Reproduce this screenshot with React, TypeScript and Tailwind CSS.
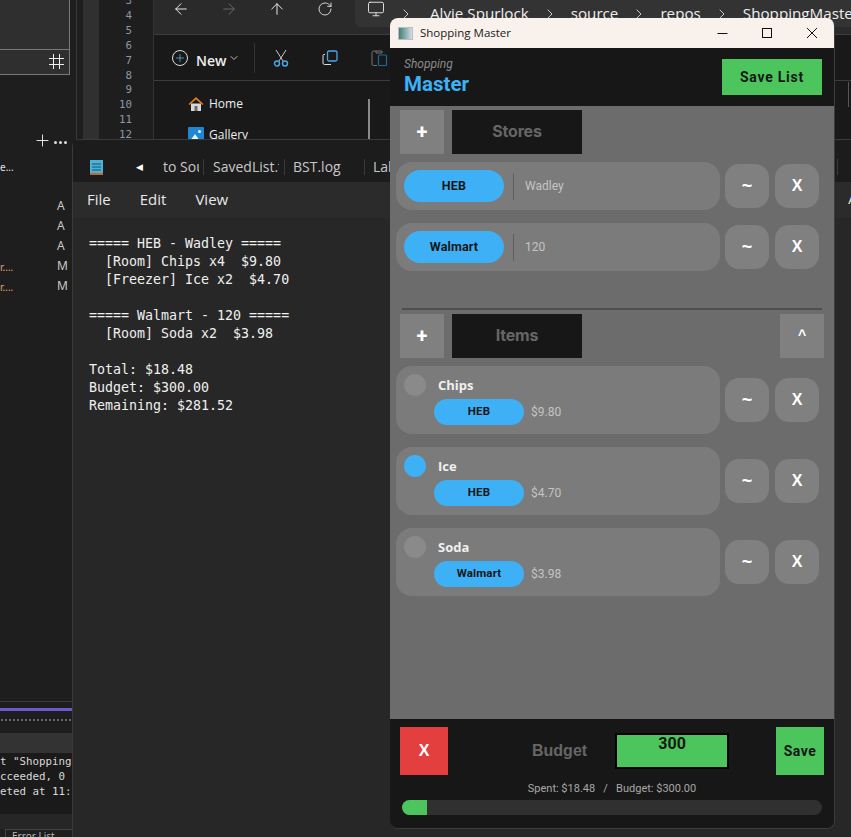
import { ArrowLeft, ArrowRight, ArrowUp, ChevronDown, ChevronRight, Monitor, Plus, RotateCw } from "lucide-react";

const stores = [
	{ name: "HEB", location: "Wadley" },
	{ name: "Walmart", location: "120" },
];

const items = [
	{ name: "Chips", store: "HEB", price: "$9.80", checked: false },
	{ name: "Ice", store: "HEB", price: "$4.70", checked: true },
	{ name: "Soda", store: "Walmart", price: "$3.98", checked: false },
];

const note = `===== HEB - Wadley =====
  [Room] Chips x4  $9.80
  [Freezer] Ice x2  $4.70

===== Walmart - 120 =====
  [Room] Soda x2  $3.98

Total: $18.48
Budget: $300.00
Remaining: $281.52`;

const CardButtons = () => (
	<div className="flex gap-[6px] font-['Liberation_Sans',sans-serif] font-bold text-white">
		<button className="w-11 h-11 rounded-[14px] bg-[#808080] text-lg leading-none">~</button>
		<button className="w-11 h-11 rounded-[14px] bg-[#808080] text-base leading-none">X</button>
	</div>
);

const SectionHead = ({ title, collapse }: { title: string; collapse?: boolean }) => (
	<div className="flex items-center h-11 pl-[10px] pr-[10px]">
		<button className="w-11 h-11 bg-[#808080] text-white text-xl font-bold leading-none">+</button>
		<div className="ml-2 w-[130px] h-11 pb-[2px] flex items-center justify-center bg-[#171717] text-[#666666] text-base font-bold font-['Inter',sans-serif] tracking-[-0.2px]">
			{title}
		</div>
		{collapse && (
			<button className="ml-auto w-11 h-11 pb-[3px] bg-[#808080] text-white text-sm font-bold leading-none font-['Liberation_Sans',sans-serif]">^</button>
		)}
	</div>
);

const ShoppingWindow = () => (
	<div className="absolute left-[390px] top-[18px] w-[445px] h-[811px] flex flex-col rounded-lg overflow-hidden border-b border-r border-[#3c3c3c] font-['Roboto',sans-serif]">
		<div className="flex items-center h-[30px] shrink-0 bg-[#f9f1ec] text-[#1a1a1a]">
			<div className="ml-[8px] w-[15px] h-[13px] border border-[#b9bdc4] bg-gradient-to-r from-[#3f7f78] to-[#d5dde3]" />
			<span className="ml-[7px] text-[11.5px] font-['Open_Sans',sans-serif]">Shopping Master</span>
			<svg className="ml-auto" width="12" height="12" viewBox="0 0 12 12" stroke="#111111" fill="none">
				<path d="M1.5 6.5h10" />
			</svg>
			<svg className="ml-[33px]" width="12" height="12" viewBox="0 0 12 12" stroke="#111111" fill="none">
				<rect x="1.5" y="1.5" width="9" height="9" />
			</svg>
			<svg className="ml-[33px] mr-[16px]" width="12" height="12" viewBox="0 0 12 12" stroke="#111111" fill="none">
				<path d="M1 1l10 10M11 1L1 11" />
			</svg>
		</div>

		<div className="flex items-center justify-between h-[58px] shrink-0 bg-[#171717] pl-[14px] pr-[12px]">
			<div className="flex flex-col">
				<span className="text-xs italic text-[#8a8a8a] leading-[14px]">Shopping</span>
				<span className="text-[20.5px] font-bold text-[#3eb0f5] leading-[26px]">Master</span>
			</div>
			<button className="w-[100px] h-9 bg-[#4bc55c] text-[#171717] text-sm font-bold tracking-[0.75px]">Save List</button>
		</div>

		<div className="flex-1 flex flex-col bg-[#6c6c6c] pt-1">
			<SectionHead title="Stores" />
			<div className="flex flex-col gap-[13px] mt-2 pl-[6px]">
				{stores.map((s) => (
					<div key={s.name} className="flex items-center gap-[5px]">
						<div className="w-[324px] h-12 flex items-center rounded-2xl bg-[#7b7b7b] pl-2">
							<div className="w-[100px] h-8 flex items-center justify-center rounded-full bg-[#3eb0f5] text-[#171717] text-[12.5px] tracking-[0.15px] font-bold">
								{s.name}
							</div>
							<div className="ml-[9px] w-px h-[27px] bg-[#5f5f5f]" />
							<span className="ml-[11px] text-xs text-[#c4c4c4]">{s.location}</span>
						</div>
						<CardButtons />
					</div>
				))}
			</div>

			<div className="h-[2px] mx-3 mt-[37px] mb-1 bg-[#4f4f4f]" />
			<SectionHead title="Items" collapse />

			<div className="flex flex-col gap-[13px] mt-2 pl-[6px]">
				{items.map((it) => (
					<div key={it.name} className="flex items-center gap-[5px]">
						<div className="w-[324px] h-[68px] flex flex-col rounded-2xl bg-[#7b7b7b] pl-[38px] relative">
							<span className={`absolute left-2 top-2 w-[22px] h-[22px] rounded-full ${it.checked ? "bg-[#3eb0f5]" : "bg-[#8a8a8a]"}`} />
							<span className="mt-[10px] ml-[4px] h-5 text-[13px] font-bold text-[#f0f0f0] font-['Open_Sans',sans-serif]">{it.name}</span>
							<div className="flex items-center mt-[3px]">
								<div className="w-[90px] h-[26px] flex items-center justify-center rounded-full bg-[#3eb0f5] text-[#171717] text-[11.5px] tracking-[0.15px] font-bold">
									{it.store}
								</div>
								<span className="ml-[7px] text-xs text-[#c4c4c4]">{it.price}</span>
							</div>
						</div>
						<CardButtons />
					</div>
				))}
			</div>
		</div>

		<div className="h-[109px] shrink-0 bg-[#171717] flex flex-col px-[10px] pt-2">
			<div className="flex items-center h-12">
				<button className="w-12 h-12 bg-[#e33f3f] text-white text-base font-bold font-['Liberation_Sans',sans-serif]">X</button>
				<span className="ml-[84px] text-base font-bold text-[#666666] font-['Liberation_Sans',sans-serif]">Budget</span>
				<div className="ml-[28px] w-[114px] h-9 border-2 border-black bg-[#4bc55c] text-center text-base font-bold text-[#171717] leading-[18px]">300</div>
				<button className="ml-auto w-12 h-12 bg-[#4bc55c] text-[#171717] text-sm font-bold tracking-[0.5px]">Save</button>
			</div>
			<div className="mt-[7px] h-[14px] flex justify-center text-[11px] leading-[14px] text-[#a8a8a8] whitespace-pre">
				<span>Spent: $18.48   /   Budget: $300.00</span>
			</div>
			<div className="mt-[4px] mx-[2px] h-[15px] rounded-full bg-[#303030] overflow-hidden">
				<div className="w-[25px] h-full bg-[#4bc55c]" />
			</div>
		</div>
	</div>
);

const NotepadWindow = () => (
	<div className="absolute left-[72px] top-[139px] w-[779px] h-[698px] flex flex-col rounded-tl-lg border-l border-t border-[#3a3a3a] bg-[#272727] text-[#e8e8e8]">
		<div className="flex items-center h-[42px] shrink-0 pt-[12px] bg-[#1c1c1c] text-sm text-[#c8c8c8] font-['Open_Sans',sans-serif] whitespace-nowrap">
			<svg className="ml-[17px]" width="13" height="16" viewBox="0 0 13 16">
				<rect y="1" width="13" height="13" fill="#4bb3d9" />
				<rect y="14" width="13" height="2" fill="#c8662a" />
				<path d="M2 5h9M2 8h9M2 11h9" stroke="#15506b" />
			</svg>
			<span className="ml-[33px] text-[9px] text-white">◀</span>
			<span className="ml-[20px] w-[36px] overflow-hidden">to Source</span>
			<span className="ml-[4px] h-[16px] w-px bg-[#3a3a3a]" />
			<span className="ml-[9px] w-[66px] overflow-hidden">SavedList.txt</span>
			<span className="ml-[5px] h-[16px] w-px bg-[#3a3a3a]" />
			<span className="ml-[8px] w-[46px]">BST.log</span>
			<span className="ml-[25px] h-[16px] w-px bg-[#3a3a3a]" />
			<span className="ml-[8px]">Lab</span>
			<span className="ml-[440px] h-[16px] w-px bg-[#3a3a3a]" />
		</div>
		<div className="flex items-center gap-[29px] h-[36px] pb-[2px] shrink-0 bg-[#2b2b2b] pl-[14px] text-[15px] font-['Open_Sans',sans-serif]">
			<span>File</span>
			<span>Edit</span>
			<span>View</span>
			<span className="ml-auto -mr-[6px] text-sm">A</span>
		</div>
		<pre className="pl-[16px] pt-[17px] font-['DejaVu_Sans_Mono',monospace] text-[13.3px] leading-[18px] text-[#f0f0f0]">{note}</pre>
	</div>
);

const ExplorerWindow = () => (
	<div className="absolute left-[153px] top-0 w-[698px] h-[140px] bg-[#191919] border-l border-[#333333] font-['Open_Sans',sans-serif] text-[#eeeeee]">
		<div className="flex items-start h-[35px] bg-[#2a2a2a] border-b border-[#3c3c3c] pl-[3px] whitespace-nowrap">
			<span className="w-12 h-[18px] shrink-0 flex items-center justify-center">
				<ArrowLeft className="w-[18px] h-[18px]" strokeWidth={1.3} />
			</span>
			<span className="w-12 h-[18px] shrink-0 flex items-center justify-center">
				<ArrowRight className="w-[18px] h-[18px] text-[#6a6a6a]" strokeWidth={1.3} />
			</span>
			<span className="w-12 h-[18px] shrink-0 flex items-center justify-center">
				<ArrowUp className="w-[18px] h-[18px]" strokeWidth={1.3} />
			</span>
			<span className="w-12 h-[18px] shrink-0 flex items-center justify-center">
				<RotateCw className="w-4 h-4" strokeWidth={1.3} />
			</span>
			<div className="ml-[6px] w-[600px] shrink-0 h-[27px] flex items-center pl-[12px] rounded-bl-md bg-[#333333] text-[15.2px] gap-[13px]">
				<Monitor className="w-[18px] h-[18px] -mt-[10px] shrink-0" strokeWidth={1.2} />
				<ChevronRight className="w-4 h-4 shrink-0" strokeWidth={1.2} />
				<span className="ml-[3px]">Alvie Spurlock</span>
				<ChevronRight className="w-4 h-4 shrink-0" strokeWidth={1.2} />
				<span>source</span>
				<ChevronRight className="w-4 h-4 shrink-0" strokeWidth={1.2} />
				<span>repos</span>
				<ChevronRight className="w-4 h-4 shrink-0" strokeWidth={1.2} />
				<span>ShoppingMaster</span>
			</div>
		</div>
		<div className="flex items-center h-[46px] border-b border-[#3c3c3c] pl-[18px] text-sm">
			<span className="w-4 h-4 flex items-center justify-center rounded-full border border-[#dddddd]">
				<Plus className="w-3 h-3 text-[#5fb8f0]" strokeWidth={1.5} />
			</span>
			<span className="ml-[8px] mt-[6px] font-semibold">New</span>
			<ChevronDown className="ml-[2px] w-3 h-3" strokeWidth={1.5} />
			<div className="ml-[14px] w-px h-[30px] bg-[#333333]" />
			<svg className="ml-[18px]" width="16" height="18" viewBox="0 0 16 18" fill="none">
				<path d="M3 1l7 11M13 1L6 12" stroke="#c8c8c8" />
				<circle cx="4" cy="14.5" r="2.5" stroke="#4aa8e8" strokeWidth="1.4" />
				<circle cx="12" cy="14.5" r="2.5" stroke="#4aa8e8" strokeWidth="1.4" />
			</svg>
			<svg className="ml-[33px]" width="16" height="16" viewBox="0 0 16 16" fill="none">
				<path d="M3 4.5H2a1 1 0 0 0-1 1V13a1.5 1.5 0 0 0 1.5 1.5H9" stroke="#dddddd" />
				<rect x="5.5" y="1" width="9.5" height="10" rx="1.5" stroke="#4aa8e8" strokeWidth="1.3" />
			</svg>
			<svg className="ml-[33px]" width="20" height="18" viewBox="0 0 20 18" fill="none">
				<path d="M5 2H2.5A1.5 1.5 0 0 0 1 3.5V15a1.5 1.5 0 0 0 1.5 1.5H6M5 2h6v2H5z" stroke="#777777" />
				<rect x="7.5" y="6" width="8" height="10.5" rx="1" stroke="#1e6a99" strokeWidth="1.2" />
			</svg>
		</div>
		<div className="flex items-center h-[45px] pl-[34px] text-xs pt-[1px]">
			<svg width="16" height="16" viewBox="0 0 16 16">
				<path d="M3 7.5V15h10V7.5z" fill="#d9d9d9" />
				<rect x="6.5" y="10" width="3" height="5" fill="#6a6a6a" />
				<path d="M8 1L0.5 8l1 1L8 3.5 14.5 9l1-1z" fill="#e5791f" />
			</svg>
			<span className="ml-[5px]">Home</span>
		</div>
		<div className="flex items-center h-[18px] pl-[34px] text-xs">
			<svg width="16" height="16" viewBox="0 0 16 16">
				<rect width="16" height="16" rx="1" fill="#1f86d6" />
				<path d="M2 14l5-7 5 7z" fill="#e8f3fb" />
				<circle cx="11.5" cy="4.5" r="1.5" fill="#e8f3fb" />
			</svg>
			<span className="ml-[5px]">Gallery</span>
		</div>
		<div className="absolute left-[214px] top-[99px] w-[2px] h-[41px] bg-[#8a8a8a]" />
		<div className="absolute left-[694px] top-[82px] w-px h-[25px] bg-[#555555]" />
	</div>
);

const EditorWindow = () => (
	<>
		<div className="absolute left-0 top-0 w-[70px] h-[75px] bg-[#2f2f2f] border-r border-b border-[#77777f]">
			<div className="absolute left-0 right-0 top-[49px] h-px bg-[#77777f]" />
			<svg className="absolute right-[5px] top-[54px]" width="15" height="15" viewBox="0 0 15 15" stroke="#eeeeee" fill="none">
				<path d="M4.5 0v15M10.5 0v15M0 4.5h15M0 10.5h15" />
			</svg>
		</div>
		<div className="absolute left-[76px] top-0 w-px h-[140px] bg-[#3a3a3a]" />
		<div className="absolute left-[83px] top-0 w-[16px] h-[140px] bg-[#303030]" />
		<div className="absolute left-[112px] top-[-6px] w-[20px] flex flex-col items-end font-['DejaVu_Sans_Mono',monospace] text-[10.8px] leading-[14.9px] text-[#8a98a8]">
			{[3, 4, 5, 6, 7, 8, 9, 10, 11, 12].map((n) => (
				<span key={n}>{n}</span>
			))}
		</div>
		<Plus className="absolute left-[33px] top-[131px] w-[19px] h-[19px] text-white" strokeWidth={1.1} />
		<div className="absolute left-[54px] top-[141px] flex gap-[2px]">
			<span className="w-[3px] h-[3px] rounded-full bg-[#dddddd]" />
			<span className="w-[3px] h-[3px] rounded-full bg-[#dddddd]" />
			<span className="w-[3px] h-[3px] rounded-full bg-[#dddddd]" />
		</div>
		<span className="absolute left-0 top-[160px] text-[10px] text-[#e0e0e0]">e...</span>
		{[
			["A", 198],
			["A", 218],
			["A", 238],
			["M", 258],
			["M", 278],
		].map(([l, y]) => (
			<span key={y} className="absolute left-[57px] text-xs leading-[16px] text-[#c9c9c9]" style={{ top: y as number }}>
				{l}
			</span>
		))}
		<span className="absolute left-0 top-[260px] text-[10px] text-[#e0a070]">r....</span>
		<span className="absolute left-0 top-[280px] text-[10px] text-[#e0a070]">r....</span>
		<div className="absolute left-0 top-[701px] w-[72px] h-px bg-[#3a3a3a]" />
		<div className="absolute left-0 top-[708px] w-[72px] h-[3px] bg-[#6a5acd]" />
		<div className="absolute left-0 top-[718px] w-[72px] h-[4px] bg-[radial-gradient(#666666_1px,transparent_1px)] bg-[length:4px_4px]" />
		<div className="absolute left-0 top-[733px] w-[72px] h-[20px] bg-[#333333]" />
		<div className="absolute left-0 top-[753px] w-[72px] h-[61px] bg-[#1a1a1a] pt-[1px] font-['DejaVu_Sans_Mono',monospace] text-[10.8px] leading-[15px] text-[#d8d8d8] whitespace-pre overflow-hidden">
			<div>t "Shopping</div>
			<div>cceeded, 0</div>
			<div>eted at 11:</div>
		</div>
		<div className="absolute left-0 top-[814px] w-[72px] h-[15px] bg-[#262626]" />
		<div className="absolute left-[5px] top-[829px] w-[67px] h-[8px] border-l border-t border-[#444444] pl-[6px] text-[10px] leading-[12px] text-[#bbbbbb] overflow-hidden font-['Open_Sans',sans-serif]">
			Error List
		</div>
	</>
);

export default function App() {
	return (
		<div className="relative w-[851px] h-[837px] overflow-hidden bg-[#1e1e1e]">
			<EditorWindow />
			<ExplorerWindow />
			<NotepadWindow />
			<ShoppingWindow />
		</div>
	);
}
